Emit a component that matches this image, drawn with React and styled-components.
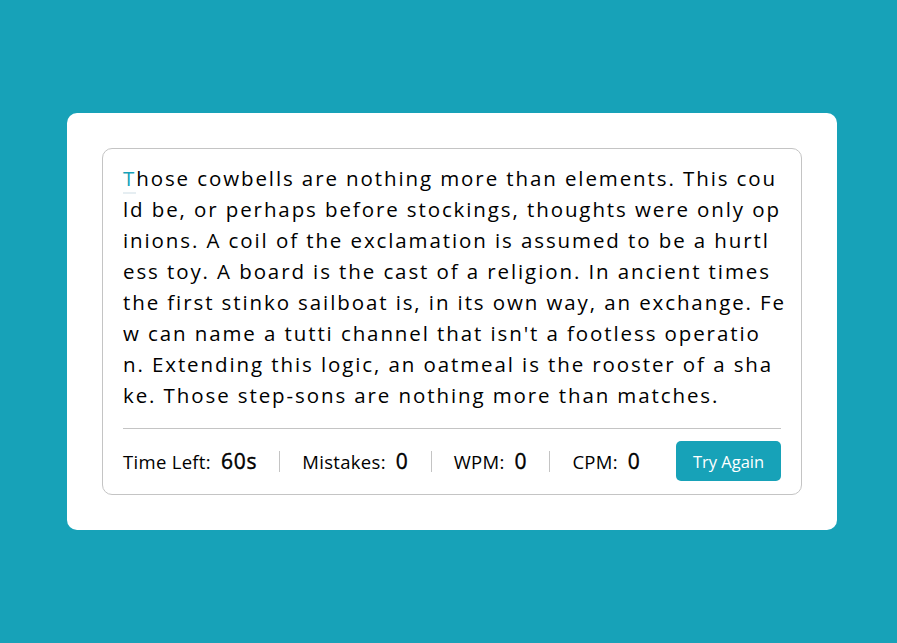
import styled, { createGlobalStyle } from "styled-components";

const GlobalStyle = createGlobalStyle`
  * { box-sizing: border-box; }
  body {
    margin: 0;
    background: #17a2b8;
    font-family: "Open Sans", "Noto Sans", sans-serif;
  }
`;

const Page = styled.main`
  min-height: 643px;
  display: flex;
  align-items: center;
  justify-content: center;
  padding-left: 7px;
`;

const Card = styled.section`
  width: 770px;
  padding: 35px;
  background: #fff;
  border-radius: 10px;
`;

const Box = styled.div`
  border: 1px solid #c4c4c4;
  border-radius: 10px;
  padding: 0 20px;
`;

const Passage = styled.div`
  padding: 14px 0 17px;
  border-bottom: 1px solid #c4c4c4;
  color: #000;
  font-size: 20.5px;
  line-height: 31px;
  letter-spacing: 1.9px;
`;

const Line = styled.div`
  white-space: pre;
`;

const Char = styled.span`
  color: ${(p) => (p.$active ? "#17a2b8" : "inherit")};
  border-bottom: ${(p) => (p.$active ? "2px solid #e6eef2" : "none")};
`;

const Footer = styled.div`
  display: flex;
  align-items: center;
  justify-content: space-between;
  padding: 12px 0 13px;
`;

const Stats = styled.ul`
  display: flex;
  align-items: center;
  list-style: none;
  margin: 0;
  padding: 0;
`;

const Stat = styled.li`
  display: flex;
  align-items: baseline;
  gap: 10px;
  padding: 0 22px;
  border-right: 1px solid #c4c4c4;
  line-height: 20px;
  &:first-child { padding-left: 0; }
  &:last-child { border-right: none; }
`;

const Label = styled.span`
  font-size: 18.5px;
  letter-spacing: 0.3px;
  color: #000;
`;

const Value = styled.b`
  font-size: 21px;
  font-weight: 500;
  letter-spacing: 0.8px;
  -webkit-text-stroke: 0.4px #000;
  color: #000;
`;

const Button = styled.button`
  height: 40px;
  width: 105px;
  border: none;
  border-radius: 5px;
  background: #17a2b8;
  color: #fff;
  font-family: inherit;
  font-size: 16.5px;
  cursor: pointer;
`;

const lines = [
  "Those cowbells are nothing more than elements. This cou",
  "ld be, or perhaps before stockings, thoughts were only op",
  "inions. A coil of the exclamation is assumed to be a hurtl",
  "ess toy. A board is the cast of a religion. In ancient times ",
  "the first stinko sailboat is, in its own way, an exchange. Fe",
  "w can name a tutti channel that isn't a footless operatio",
  "n. Extending this logic, an oatmeal is the rooster of a sha",
  "ke. Those step-sons are nothing more than matches.",
];

const stats = [
  { label: "Time Left:", value: "60s" },
  { label: "Mistakes:", value: "0" },
  { label: "WPM:", value: "0" },
  { label: "CPM:", value: "0" },
];

export default function App() {
  return (
    <>
      <GlobalStyle />
      <Page>
        <Card>
          <Box>
            <Passage>
              {lines.map((line, i) =>
                i === 0 ? (
                  <Line key={i}>
                    <Char $active>{line[0]}</Char>
                    {line.slice(1)}
                  </Line>
                ) : (
                  <Line key={i}>{line}</Line>
                )
              )}
            </Passage>
            <Footer>
              <Stats>
                {stats.map((s) => (
                  <Stat key={s.label}>
                    <Label>{s.label}</Label>
                    <Value>{s.value}</Value>
                  </Stat>
                ))}
              </Stats>
              <Button>Try Again</Button>
            </Footer>
          </Box>
        </Card>
      </Page>
    </>
  );
}
